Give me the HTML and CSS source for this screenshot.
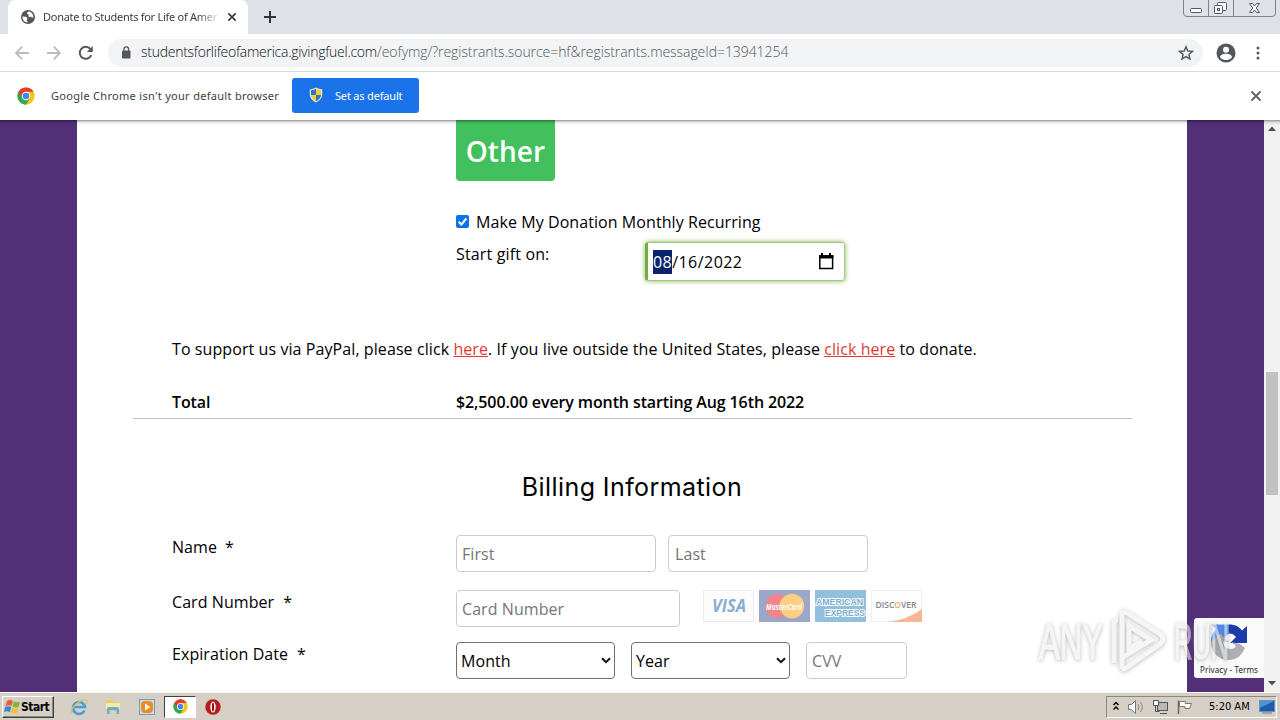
FILE: index.html
```
<!DOCTYPE html>
<html lang="en">
<head>
<meta charset="utf-8">
<title>Donate to Students for Life of America</title>
<link rel="stylesheet" href="styles.css">
</head>
<body>
<svg width="0" height="0" class="defs">
  <symbol id="chrome" viewBox="0 0 48 48">
    <circle cx="24" cy="24" r="23" fill="#fbc116"/>
    <path d="M24 24 4.1 12.5A23 23 0 0 1 43.9 12.5H24z" fill="#e33b2e"/>
    <path d="M4.1 12.5A23 23 0 0 0 24 47L34 29.7 24 24z" fill="#2da94f"/>
    <path d="M4.1 12.5 14 29.7 24 24V12.500z" fill="#e33b2e"/>
    <circle cx="24" cy="24" r="11.500" fill="#fff"/>
    <circle cx="24" cy="24" r="8.800" fill="#4285f4"/>
  </symbol>
</svg>
<div class="screen">
  <header class="tabstrip">
    <div class="tab">
      <svg class="globe" width="14" height="14" viewBox="0 0 14 14"><circle cx="7" cy="7" r="7" fill="#54585d"/><path d="M1.500 6.500c2 .2 3.500 0 4.600 1.200.8 1-.4 1.500-.3 2.500.1.800 1 .8.900 2.300C3.500 12.300 1.300 9.800 1.500 6.500zM7.500 1.600c-.8.700-1.700.8-1.500 1.700.2.700 1.300.6 1.600 1.400.3.900-.9 1.300 0 1.900 1 .7 2.100-.2 3 .6.500.5 1.100.3 1.800.2.100-3-1.900-5.500-4.900-5.800z" fill="#fff"/></svg>
      <span class="tab-title">Donate to Students for Life of America</span>
      <svg class="tab-close" width="10" height="10" viewBox="0 0 10 10"><path d="M1.300 1.300l7.400 7.400M8.700 1.300L1.300 8.700" stroke="#3c4043" stroke-width="1.700"/></svg>
    </div>
    <svg class="newtab" width="12" height="12" viewBox="0 0 12 12"><path d="M6 0v12M0 6h12" stroke="#303338" stroke-width="2"/></svg>
    <svg class="winbtns" width="94" height="18" viewBox="0 0 94 18"><path d="M.5 0v13q0 3.500 3.500 3.500h85q3.500 0 3.500-3.500V0M25.500 0v16M50.500 0v16" fill="none" stroke="#7f838b"/><g fill="#f7f8fa" stroke="#555a63"><rect x="7.500" y="8.500" width="11" height="4" rx="1"/><rect x="34.500" y="2.500" width="9" height="8" rx="1"/><rect x="31.500" y="5.500" width="8" height="8" rx="1"/><rect x="34.500" y="8.500" width="2" height="2"/><path d="M66.500 3.500h3l2 2.500 2-2.500h3l-3.300 4.500 3.300 4.500h-3l-2-2.500-2 2.500h-3l3.300-4.500z"/></g></svg>
  </header>
  <nav class="toolbar">
    <svg class="nav-ic" width="16" height="16" viewBox="0 0 16 16"><path d="M15 8H2M8.200 1.700L2 8l6.200 6.300" fill="none" stroke="#babcbe" stroke-width="1.800"/></svg>
    <svg class="nav-ic" width="16" height="16" viewBox="0 0 16 16"><path d="M1 8h13M7.800 1.700L14 8l-6.200 6.300" fill="none" stroke="#babcbe" stroke-width="1.800"/></svg>
    <svg class="nav-ic" width="16" height="16" viewBox="0 0 16 16"><path d="M13.300 10.200A6 6 0 1 1 12.400 4" fill="none" stroke="#54585d" stroke-width="2"/><path d="M14.800 1v6H8.800z" fill="#54585d"/></svg>
    <div class="omnibox">
      <svg width="10" height="13" viewBox="0 0 10 13"><rect x="1" y="4.500" width="8.500" height="8" rx="1" fill="#54585d"/><path d="M2.900 5V3.200a2.300 2.300 0 0 1 4.700 0V5" fill="none" stroke="#54585d" stroke-width="1.300"/></svg>
      <span class="url"><span class="host">studentsforlifeofamerica.givingfuel.com</span><span class="path">/eofymg/?registrants.source=hf&amp;registrants.messageId=13941254</span></span>
      <svg class="star" width="16" height="16" viewBox="0 0 16 16"><path d="M8 1.700l1.800 4.300 4.700.4-3.600 3.100 1.100 4.600L8 11.600l-4 2.500 1.100-4.600L1.500 6.400l4.700-.4z" fill="none" stroke="#54585d" stroke-width="1.400"/></svg>
    </div>
    <svg class="avatar" width="20" height="20" viewBox="0 0 20 20"><circle cx="10" cy="10" r="9.500" fill="#54585d"/><circle cx="10" cy="6.800" r="3" fill="#fff"/><path d="M4 14.200c0-2.500 3.500-3.500 6-3.500s6 1 6 3.500c-1.500 1.900-3.500 2.800-6 2.800s-4.500-.9-6-2.800z" fill="#fff"/></svg>
    <svg class="kebab" width="4" height="14" viewBox="0 0 4 14"><g fill="#54585d"><circle cx="2" cy="2" r="1.500"/><circle cx="2" cy="7" r="1.500"/><circle cx="2" cy="12" r="1.500"/></g></svg>
  </nav>
  <div class="infobar">
    <svg width="18" height="18"><use href="#chrome"/></svg>
    <span class="info-text">Google Chrome isn't your default browser</span>
    <div class="set-default">
      <svg width="14" height="16" viewBox="0 0 14 16"><path d="M7 .5C5 1.800 3 2.200.8 2.300V7c0 4 2.500 6.800 6.200 8.500C10.700 13.800 13.200 11 13.200 7V2.300C11 2.200 9 1.800 7 .5z" fill="#e5e8df"/><path d="M7 1.800C5.300 2.800 4 3.100 2 3.200V8h5zM7 8h5c-.3 3-2.200 5-5 6.300z" fill="#2f75c5"/><path d="M7 1.800c1.700 1 3 1.300 5 1.400V8H7zM2 8h5v6.300C4.200 13 2.300 11 2 8z" fill="#f5cf2d"/></svg>
      <span>Set as default</span>
    </div>
    <svg class="info-close" width="12" height="12" viewBox="0 0 12 12"><path d="M1.500 1.500l9 9M10.500 1.500l-9 9" stroke="#5f6368" stroke-width="1.800"/></svg>
  </div>
  <div class="viewport">
    <main class="sheet">
      <div class="row"><div class="label"></div><div class="other">Other</div></div>
      <div class="row recurring"><div class="label"></div>
        <svg width="13" height="13" viewBox="0 0 13 13"><rect width="13" height="13" rx="2" fill="#0b73ea"/><path d="M2.700 6.800l2.700 2.700 5-6" fill="none" stroke="#fff" stroke-width="2"/></svg>
        <span>Make My Donation Monthly Recurring</span></div>
      <div class="row start"><div class="label"></div><div class="start-label">Start gift on:</div>
        <div class="date"><span class="sel">08</span><span>/16/2022</span><svg width="16" height="17" viewBox="0 0 16 17"><path d="M1.800 3h12.800v12.500H1.800z" fill="none" stroke="#000" stroke-width="1.500"/><path d="M1 2.200h14.400v3.400H1zM3 0h2v3H3zM11 0h2v3h-2z"/></svg></div></div>
      <p class="paypal">To support us via PayPal, please click <a>here</a>. If you live outside the United States, please <a>click here</a> to donate.</p>
      <div class="row total"><div class="label">Total</div><div class="amount">$2,500.00 every month starting Aug 16th 2022</div></div>
      <h2>Billing Information</h2>
      <div class="row name"><div class="label">Name<i>*</i></div><div class="field w200">First</div><div class="field w200">Last</div></div>
      <div class="row card"><div class="label">Card Number<i>*</i></div><div class="field w224">Card Number</div>
        <div class="cards">
          <svg width="51" height="32" viewBox="0 0 51 32"><rect x=".5" y=".5" width="50" height="31" fill="#fcfcfd" stroke="#ececf0"/><text x="9" y="22" class="visa" textLength="34" lengthAdjust="spacingAndGlyphs">VISA</text></svg>
          <svg width="51" height="32" viewBox="0 0 51 32"><rect width="51" height="32" fill="#9ba6c8"/><circle cx="18.500" cy="16" r="12" fill="#f1848c"/><circle cx="33" cy="16" r="12.300" fill="#fbcf82"/><text x="7" y="20" class="mc" textLength="36" lengthAdjust="spacingAndGlyphs">MasterCard</text></svg>
          <svg width="51" height="32" viewBox="0 0 51 32"><rect width="51" height="32" fill="#91bfdc"/><text x="1" y="15" class="amex" textLength="47" lengthAdjust="spacingAndGlyphs">AMERICAN</text><text x="10" y="25.500" class="amex" textLength="40" lengthAdjust="spacingAndGlyphs">EXPRESS</text></svg>
          <svg width="51" height="32" viewBox="0 0 51 32"><rect x=".5" y=".5" width="50" height="31" fill="#fdfdfd" stroke="#f0f0f0"/><path d="M17 32Q36 30 51 19v13z" fill="#f7b694"/><text x="4.500" y="17.500" class="disc" textLength="41" lengthAdjust="spacingAndGlyphs">DISC<tspan fill="#f5a77c">O</tspan>VER</text></svg>
        </div></div>
      <div class="row exp"><div class="label">Expiration Date<i>*</i></div>
        <div class="field select">Month<svg width="10" height="7" viewBox="0 0 10 7"><path d="M1 1.200l4 4 4-4" fill="none" stroke="#111" stroke-width="2"/></svg></div>
        <div class="field select">Year<svg width="10" height="7" viewBox="0 0 10 7"><path d="M1 1.200l4 4 4-4" fill="none" stroke="#111" stroke-width="2"/></svg></div>
        <div class="field w101">CVV</div></div>
    </main>
    <div class="scrollbar"><svg width="16" height="17" viewBox="0 0 16 17"><path d="M4 11l4-4.500 4 4.500z" fill="#505050"/></svg><div class="thumb"></div><svg class="down" width="16" height="17" viewBox="0 0 16 17"><path d="M4 6l4 4.500L12 6z" fill="#505050"/></svg></div>
    <div class="recaptcha">
      <svg width="40" height="40" viewBox="0 0 40 40"><path d="M20 2.500c6 0 10 2 13 6l5-4.500v17H21l6-6c-2-2.500-4-3.500-7-3.500z" fill="#1c3aa9"/><path d="M2 20C2 14 4 10 7 7L2.500 2.500H20V12c-4 1-4 4-4 8l-4-4.500z" fill="#4f8cf0"/><path d="M2 20l9-8.500 9 8.500h-6c1 4 3 7 8 7 2 0 4-1 5-3l-5-4 9 2 5 4c-3 7-8 12-16 12C10 38 2 31 2 20z" fill="#aeb0b4"/></svg>
      <span>Privacy - Terms</span>
    </div>
    <div class="watermark">
      <svg width="202" height="68" viewBox="0 0 202 68"><text x="1" y="51" textLength="64" lengthAdjust="spacingAndGlyphs">ANY</text><text x="136" y="51" textLength="55" lengthAdjust="spacingAndGlyphs">RUN</text><path d="M76 55V15q0-3 4-3M84 50V7q0-5 5-2l33 21q6 5 0 10L88 60q-4 3-4-4v-6l29-18-22-14v23l13-8"/></svg>
    </div>
  </div>
  <footer class="taskbar">
    <div class="start-btn"><svg width="17" height="16" viewBox="0 0 17 16"><path d="M3 2q3-2 6 0L7.500 7q-3-1.500-6 0z" fill="#e8612c"/><path d="M10 2.500q3 1.500 6 0L14.500 8q-3 1-6-.5z" fill="#7eb53c"/><path d="M1.200 8q3-1.500 6 0L6 13q-3-1.500-6 0z" fill="#3d83d5"/><path d="M8.200 8.500q3 1.500 6 .5L13 14q-3 1-6.200-.5z" fill="#f5c22f"/></svg><b>Start</b></div>
    <div class="quick">
      <svg width="18" height="18" viewBox="0 0 18 18"><path d="M14.500 12.500A6 6 0 1 1 15 9H4" fill="none" stroke="#3fa0dc" stroke-width="2.500"/><path d="M2 15C-1 12 9 1 16 2c2 1 1 3 0 4" fill="none" stroke="#e5c04e" stroke-width="1.300"/></svg>
      <svg width="18" height="18" viewBox="0 0 18 18"><path d="M2 2h6l1 2h6v9H2z" fill="#e8ca6b"/><path d="M2 5h14v6H2z" fill="#fae9a7"/><path d="M3 16v-5q0-2 2-2h8q2 0 2 2v5h-2.500v-4h-7v4z" fill="#69acd5"/></svg>
      <svg width="18" height="18" viewBox="0 0 18 18"><rect x="1.500" y="1.500" width="15" height="15" fill="#c7def0" stroke="#6e9dc4"/><rect x="3" y="3" width="12" height="12" rx="4" fill="#f28a18"/><path d="M7 5.500l5.500 3.500L7 12.500z" fill="#fff"/></svg>
      <div class="active"><svg width="15" height="15"><use href="#chrome"/></svg></div>
      <svg width="18" height="18" viewBox="0 0 18 18"><circle cx="9" cy="9" r="7.700" fill="#b81a1e"/><ellipse cx="9" cy="9" rx="2.700" ry="5.500" fill="#fff"/><ellipse cx="9" cy="9" rx="1.100" ry="4.500" fill="#8d1014"/></svg>
    </div>
    <div class="tray">
      <svg width="8" height="11" viewBox="0 0 8 11"><path d="M1.500 4L4 1.500 6.500 4M1.500 8.500L4 6l2.500 2.500" fill="none" stroke="#000" stroke-width="1.500"/></svg>
      <svg width="18" height="16" viewBox="0 0 18 16"><path d="M1.500 5.500h3l4-4v13l-4-4h-3z" fill="#fff" stroke="#777"/><path d="M11 5q2 3 0 6M13.500 3q3.500 5 0 10" fill="none" stroke="#888"/></svg>
      <svg width="18" height="16" viewBox="0 0 18 16"><rect x="5.500" y="3.500" width="10" height="8" fill="#b8b8b4" stroke="#555"/><path d="M8 14.500h7M1.500 1.500h5v5h-5zM3.500 6.500v6h4" fill="none" stroke="#555"/><path d="M2 2h4v4H2z" fill="#fff"/></svg>
      <svg width="17" height="16" viewBox="0 0 17 16"><path d="M1.500 15V1.500" stroke="#666" stroke-width="1.500"/><path d="M2.500 2.500h6v2h6l-2 5H8v-2H2.500z" fill="#fff" stroke="#777"/></svg>
      <span class="clock">5:20 AM</span>
      <svg width="16" height="14" viewBox="0 0 16 14"><rect x=".5" y=".5" width="15" height="11" fill="#1c5cab" stroke="#6d90b8"/><path d="M1 1h14L1 8z" fill="#4c92d8"/><path d="M3 13h10" stroke="#777"/></svg>
    </div>
  </footer>
</div>
</body>
</html>
```
FILE: styles.css
```
* { box-sizing: border-box; }
body { margin: 0; font-family: "Open Sans", "Noto Sans", sans-serif; font-size: 16px; color: #000; }
svg { display: block; flex: none; }
.defs { position: absolute; }
.screen { width: 1280px; height: 720px; display: flex; flex-direction: column; overflow: hidden; background: #fff; white-space: nowrap; }

.tabstrip { height: 34px; flex: none; background: #dee1e6; display: flex; align-items: flex-start; padding-left: 8px; }
.tab { width: 240px; height: 34px; background: #fff; border-radius: 7px 7px 0 0; display: flex; align-items: center; padding-left: 13px; }
.tab-title { width: 174px; margin-left: 8px; padding-bottom: 1px; overflow: hidden; font: 11px "Noto Sans", sans-serif; letter-spacing: -.27px; color: #3c4043; -webkit-mask-image: linear-gradient(90deg, #000 155px, transparent 178px); mask-image: linear-gradient(90deg, #000 155px, transparent 178px); }
.tab-close { margin-left: 10px; }
.newtab { margin: 11px 0 0 16px; }
.winbtns { margin-left: auto; margin-right: 3px; }

.toolbar { height: 38px; flex: none; border-bottom: 1px solid #dadce0; display: flex; align-items: center; padding-left: 14px; }
.nav-ic { margin-right: 16px; }
.omnibox { width: 1095px; height: 28px; margin-left: -2px; border-radius: 14px; background: #f1f3f4; display: flex; align-items: center; padding: 0 9px 0 13px; }
.url { margin-left: 10px; padding-bottom: 2px; font: 300 14px "Open Sans", sans-serif; }
.host { width: 236px; color: #101114; display: inline-block; letter-spacing: -.27px; }
.path { color: #54585d; display: inline-block; letter-spacing: -.06px; }
.star { margin-left: auto; }
.avatar { margin-left: 13px; }
.kebab { margin-left: 20px; }

.infobar { height: 48px; flex: none; display: flex; align-items: center; padding: 0 0 1px 17px; }
.info-text { width: 241px; margin-left: 16px; padding-bottom: 1px; font: 11px "Noto Sans", sans-serif; letter-spacing: .3px; color: #3c4043; }
.set-default { width: 127px; height: 35px; background: #1a73e8; border-radius: 3px; color: #fff; display: flex; align-items: center; padding: 0 0 1px 17px; gap: 12px; font: 11px "Noto Sans", sans-serif; letter-spacing: -.18px; }
.info-close { margin-left: auto; margin-right: 18px; }

.viewport { height: 572px; flex: none; position: relative; background: #522f77; display: flex; padding-left: 77px; overflow: hidden; }
.viewport::before { content: ""; position: absolute; left: 0; right: 0; top: 0; height: 5px; background: linear-gradient(rgba(0,0,0,.4), rgba(0,0,0,.08) 50%, transparent); z-index: 2; }
.sheet { width: 1110px; background: #fff; flex: none; letter-spacing: .07px; }
.row { display: flex; padding-left: 95px; }
.label { width: 284px; flex: none; line-height: 24px; }
.label i { font-style: normal; margin-left: 9px; }
.name i { margin-left: 8px; }
.other { width: 99px; height: 61px; background: #41c05d; color: #fff; border-radius: 0 0 4px 4px; font-size: 28px; font-weight: 600; line-height: 62px; text-align: center; }
.recurring { margin-top: 29px; height: 24px; align-items: center; }
.recurring svg { margin-top: -1px; }
.recurring span { margin-left: 7px; }
.start { margin-top: 7px; height: 40px; }
.start-label { width: 189px; line-height: 26px; letter-spacing: .15px; }
.date { width: 200px; height: 39px; margin-top: 1px; border: 1px solid #a3c885; border-left: 3px solid #74ac43; border-radius: 3px; box-shadow: 0 0 5px #7cb342; display: flex; align-items: center; padding: 0 10px 0 5px; letter-spacing: .45px; }
.sel { background: #0a246a; color: #fff; line-height: 24px; }
.date svg { margin-left: auto; }
.paypal { margin: 56px 0 0 95px; line-height: 24px; letter-spacing: .083px; }
.paypal a { color: #dc3c36; text-decoration: underline; }
.total { margin: 29px 0 0 56px; width: 999px; height: 29px; padding-left: 39px; border-bottom: 1px solid #bcbcbc; font-weight: 600; line-height: 24px; letter-spacing: -.11px; }
h2 { margin: 53px 0 0; font: 400 25px/30px Inter, sans-serif; letter-spacing: .42px; text-align: center; }
.name { margin-top: 33px; }
.name .field { margin-right: 12px; }
.card { margin-top: 18px; }
.exp { margin-top: 15px; }
.field { height: 37px; border: 1px solid #ccc; border-radius: 4px; padding: 0 5px; line-height: 36px; color: #757575; }
.name .field + .field { padding-left: 6px; }
.w200 { width: 200px; }
.w224 { width: 224px; }
.w101 { width: 101px; }
.select { width: 159px; margin-right: 16px; border-color: #707070; color: #000; display: flex; align-items: center; justify-content: space-between; padding: 0 3px 0 4px; }
.cards { display: flex; gap: 5px; margin-left: 23px; letter-spacing: 0; }
.visa { font: italic 700 17px "Open Sans", sans-serif; fill: #8badd0; }
.mc { font: italic 700 9.5px "Open Sans", sans-serif; fill: #fff; }
.amex { font: 700 9.5px "Liberation Sans", sans-serif; fill: #78add0; stroke: #fff; stroke-width: 2px; paint-order: stroke; }
.disc { font: 600 9.5px "Open Sans", sans-serif; fill: #858585; }

.scrollbar { width: 16px; background: #f1f1f1; margin-left: auto; display: flex; flex-direction: column; }
.thumb { width: 12px; height: 123px; background: #c1c1c1; margin: 235px 2px 0; }
.down { margin-top: auto; }
.recaptcha { position: absolute; left: 1194px; top: 498px; width: 70px; height: 60px; background: #fafafa; border-radius: 3px 0 0 3px; display: flex; flex-direction: column; align-items: center; padding-top: 4px; font: 8px/16px "Noto Sans", sans-serif; letter-spacing: .1px; color: #222; }
.watermark { position: absolute; left: 1038px; top: 488px; font: 400 50px "Liberation Sans", sans-serif; z-index: 3; opacity: .58; filter: drop-shadow(0 1px 2px rgba(90,90,90,.7)); }
.watermark text { fill: #efefef; stroke: #efefef; stroke-width: 1.5px; }
.watermark path { fill: none; stroke: #efefef; stroke-width: 5px; }

.taskbar { height: 28px; flex: none; background: #d5cfc6; border-top: 1px solid #f7f5f1; display: flex; align-items: center; padding: 0 3px 0 2px; font: 11px "DejaVu Sans Condensed", "DejaVu Sans", sans-serif; }
.start-btn { width: 52px; height: 22px; border: 1px solid; border-color: #fff #404040 #404040 #fff; box-shadow: inset -1px -1px #8c8880; display: flex; align-items: center; padding-left: 1px; }
.start-btn b { font-size: 12px; letter-spacing: -.5px; }
.quick { display: flex; align-items: center; margin-left: 16px; gap: 16px; }
.active { width: 32px; height: 22px; margin: 0 -8px; background: #fff; border: 1px solid; border-color: #404040 #fff #fff #404040; display: flex; align-items: center; justify-content: center; }
.tray { width: 171px; height: 22px; margin-left: auto; border: 1px solid; border-color: #8c8880 #fff #fff #8c8880; display: flex; align-items: center; padding-left: 5px; gap: 7px; }
.clock { width: 43px; margin-left: 8px; letter-spacing: 0; }
```
